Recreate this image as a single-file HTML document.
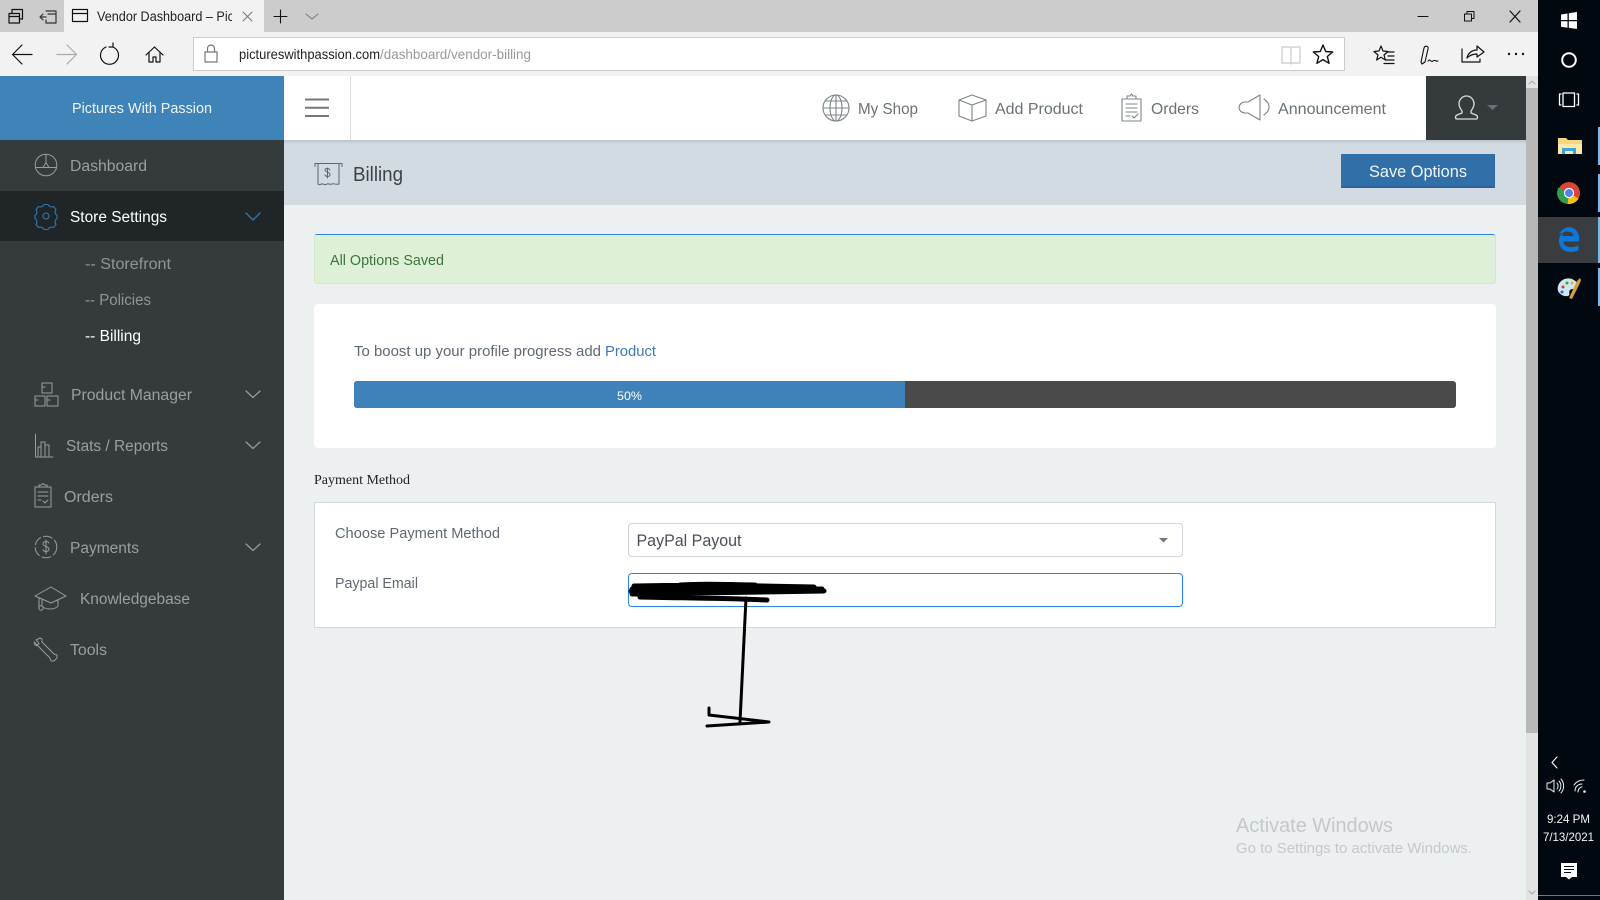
<!DOCTYPE html>
<html lang="en"><head><meta charset="utf-8"><title>Vendor Dashboard</title>
<style>
html,body{margin:0;padding:0;width:1600px;height:900px;overflow:hidden;background:#ecf0f1;font-family:"Liberation Sans",sans-serif}
div{position:absolute;box-sizing:border-box}
svg{position:absolute;left:0;top:0}
text{font-family:"Liberation Sans",sans-serif}
</style></head><body>
<div style="left:0;top:0;width:1538px;height:32px;background:#ccc"></div>
<div style="left:64px;top:0;width:200px;height:32px;background:#f2f2f2"></div>
<div style="left:0;top:32px;width:1538px;height:44px;background:#f2f2f2"></div>
<div style="left:193px;top:37px;width:1152px;height:34px;background:#fff;border:1px solid #ccc"></div>
<div style="left:284px;top:76px;width:1242px;height:824px;background:#ecf0f1"></div>
<div style="left:284px;top:76px;width:1242px;height:64px;background:#fff"></div>
<div style="left:350px;top:76px;width:1px;height:64px;background:#ddd"></div>
<div style="left:1426px;top:76px;width:100px;height:64px;background:#353b3d"></div>
<div style="left:284px;top:140px;width:1242px;height:65px;background:#d2dae2"></div>
<div style="left:284px;top:140px;width:1242px;height:4px;background:linear-gradient(#bcc4cb,#d2dae2)"></div>
<div style="left:0;top:76px;width:284px;height:64px;background:#3f84b8"></div>
<div style="left:0;top:140px;width:284px;height:760px;background:#353b3d"></div>
<div style="left:0;top:191px;width:284px;height:50px;background:#202628"></div>
<div style="left:1341px;top:154px;width:154px;height:34px;background:#316fa8;border-bottom:2px solid #2b639a;border-right:1px solid #2d679e"></div>
<div style="left:314px;top:234px;width:1182px;height:50px;background:#dff0d8;border:1px solid #d6e9c6;border-top:1px solid #2b85e8;border-radius:3px"></div>
<div style="left:314px;top:304px;width:1182px;height:144px;background:#fff;border-radius:4px"></div>
<div style="left:354px;top:381px;width:1102px;height:27px;background:#4a4a4a;border-radius:3px"></div>
<div style="left:354px;top:381px;width:551px;height:27px;background:#3f82b9;border-radius:3px 0 0 3px"></div>
<div style="left:314px;top:502px;width:1182px;height:126px;background:#fff;border:1px solid #d0d9e0"></div>
<div style="left:628px;top:523px;width:555px;height:34px;background:#fff;border:1px solid #ced4da;border-radius:4px"></div>
<div style="left:628px;top:573px;width:555px;height:34px;background:#fff;border:1px solid #2b85e8;border-radius:4px"></div>
<div style="left:1526px;top:76px;width:12px;height:824px;background:#e3e3e3"></div>
<div style="left:1526px;top:88px;width:12px;height:645px;background:#b8b8b8"></div>
<div style="left:1538px;top:0;width:62px;height:900px;background:#01080f"></div>
<div style="left:1538px;top:217px;width:60px;height:46px;background:#393d40"></div>
<div style="left:1598px;top:127px;width:2px;height:38px;background:#76b9ed"></div>
<div style="left:1598px;top:174px;width:2px;height:38px;background:#76b9ed"></div>
<div style="left:1598px;top:217px;width:2px;height:46px;background:#76b9ed"></div>
<div style="left:1598px;top:268px;width:2px;height:38px;background:#76b9ed"></div>
<div style="left:1538px;top:895px;width:62px;height:1px;background:#777"></div>

<svg width="1600" height="900" viewBox="0 0 1600 900" fill="none" stroke-linecap="round" stroke-linejoin="round">
<!-- browser tab row -->
<g stroke="#111" stroke-width="1.200">
<path d="M12 13V9.500h10.500V19H19M9 13.500h10.500V23H9zM9 16.500h10.500"/>
<path d="M46 11h10v12H46v-3M46 17h-6l3-3m-3 3l3 3M48 14h8" stroke="#333"/>
<path d="M72.500 9.500h15v12h-15zM72.500 13.500h15"/>
<path d="M243 12l9 9m0-9l-9 9" stroke="#777" stroke-width="1"/>
<path d="M280.500 10v13M274 16.500h13" stroke-width="1.100"/>
<path d="M306 14l6 5 6-5" stroke="#777" stroke-width="1"/>
<path d="M1418 16.500h10" stroke-width="1.100"/>
<path d="M1464.500 14h7v7h-7zM1467 14v-2.500h7v7h-2.500" stroke-width="1"/>
<path d="M1510 11l10 11m0-11l-10 11"/>
</g>
<text x="97" y="21" font-size="13.500" fill="#222" textLength="137" lengthAdjust="spacingAndGlyphs">Vendor Dashboard – Pic</text>
<rect x="232" y="6" width="6" height="20" fill="#f2f2f2"/>
<!-- browser toolbar -->
<g stroke="#111" stroke-width="1.200">
<path d="M13 54.500h19M22 45l-9.500 9.500L22 64"/>
<path d="M57 54.500h19M67 45l9.500 9.500L67 64" stroke="#aaa"/>
<path d="M106 47a9 9 0 1 0 7 0M113 47v-4m0 4h-4"/>
<path d="M146 55l8.500-8 8.500 8M149 53v9h4v-5h3v5h4v-9"/>
<path d="M205 52h12v10h-12zM207.500 52v-3.500a3.500 3.500 0 0 1 7 0V52" stroke="#777"/>
<path d="M1282 47h8l1 1 1-1h8v16h-8l-1 1-1-1h-8zM1291 48v15" stroke="#d2d2d2" stroke-width="1.400"/>
<path d="M1323 45l2.700 6.500 7 .5-5.400 4.500 1.800 6.800-6.100-3.700-6.100 3.700 1.800-6.800-5.400-4.500 7-.5z" stroke-width="1.400"/>
<path d="M1381 46l2 5 5 .5-4 3.500 1.400 5-4.400-2.800-4.400 2.800 1.400-5-4-3.500 5-.5zM1387 52h7M1388 56h6M1386 60h8M1384 63.500h10" stroke-width="1.200"/>
<path d="M1421 62l3-14c1-3 5-2 4 1l-3 13-3 2zM1428 61c2-3 3 2 5 0s3 1 5 0" stroke-width="1.100"/>
<path d="M1462 49v13h18v-3M1467 58c1-5 5-8 10-8v-4l7 6-7 5v-3c-4 0-7 1-10 4" stroke-width="1.200"/>
</g>
<g fill="#111"><circle cx="1509" cy="54" r="1.200"/><circle cx="1516" cy="54" r="1.200"/><circle cx="1523" cy="54" r="1.200"/></g>
<text x="239" y="59" font-size="14" fill="#222" textLength="141" lengthAdjust="spacingAndGlyphs">pictureswithpassion.com</text>
<text x="380" y="59" font-size="14" fill="#999" textLength="151" lengthAdjust="spacingAndGlyphs">/dashboard/vendor-billing</text>
<!-- logo + top nav -->
<text x="72" y="113" font-size="14.500" fill="#eef4f9" textLength="140" lengthAdjust="spacingAndGlyphs">Pictures With Passion</text>
<path d="M305 99.500h24M305 107.800h24M305 116h24" stroke="#777" stroke-width="2" stroke-linecap="butt"/>
<g stroke="#7c8488" stroke-width="1.100">
<circle cx="836" cy="108" r="13"/><ellipse cx="836" cy="108" rx="6" ry="13"/><path d="M836 95v26M823 108h26M825 101h22M825 115h22"/>
<path d="M959 100l13-5 14 5v16l-14 5-13-5zM959 100l13 5 14-5M972 105v16"/>
<path d="M1126 99h-4v22h19V99h-4M1127 99v-3h3l1.500-2 1.500 2h3v3zM1126 104h11M1126 108h11M1126 112h11M1126 116h4M1132 116l2 2 4-4"/>
<path d="M1260 95v25l-12-7h-3a6 6 0 0 1-6-5.500 6 6 0 0 1 6-5.500h3zM1264 99c3 2 5 5 5 8s-2 6-5 8"/>
</g>
<g font-size="16" fill="#6a7277">
<text x="858" y="114" textLength="60" lengthAdjust="spacingAndGlyphs">My Shop</text>
<text x="995" y="114" textLength="88" lengthAdjust="spacingAndGlyphs">Add Product</text>
<text x="1151" y="114" textLength="48" lengthAdjust="spacingAndGlyphs">Orders</text>
<text x="1278" y="114" textLength="108" lengthAdjust="spacingAndGlyphs">Announcement</text>
</g>
<path d="M1459 104a7.500 8 0 0 1 15 0c0 3-1.500 5-3 7v2l5 2c2 1 2 4 0 4h-19c-2 0-2-3 0-4l5-2v-2c-1.500-2-3-4-3-7z" stroke="#d9dcdd" stroke-width="1.300"/>
<path d="M1487 105h11l-5.500 5z" fill="#6a7174"/>
<!-- scrollbar arrows -->
<path d="M1529 84l3-3 3 3" stroke="#aaa" stroke-width="1.200"/>
<path d="M1529 891l3 3 3-3" stroke="#aaa" stroke-width="1.200"/>
<!-- sidebar -->
<g stroke="#999c9c" stroke-width="1">
<circle cx="46" cy="165" r="10.800"/><path d="M35.500 167.500h21M46 155v7M43 167.500l3-5 3 5"/>
<path d="M42 383h10v10H42zM35 396h10v10H35zM47 396h11v10H47zM42 383v4h3M35 396v4h3M47 396v4h3"/>
<path d="M35.500 434v23h17.500M38 456v-9h3v9M41 456v-14h4v14M45 456v-11h4v11"/>
<path d="M39 487h-4v20h16v-20h-4M39 487v-2h2l2-1.500 2 1.500h2v2zM38 492h10M38 496h10M38 500h3M43 501l2 2 3-3"/>
<circle cx="46" cy="547" r="10.800" stroke-dasharray="9 3"/>
<path d="M49 543c-1-2-6-2-6 1s6 2 6 5-5 3-6 1M46 540v14"/>
<path d="M35 596l16-9 15 9-15 7zM42 600v6c3 4 13 4 16 0v-6M39 598v10"/><circle cx="41" cy="608" r="2.200"/>
<path d="M36 640l4-2 2 1v3l12 12 3 1 0 3-3 3h-3l-1-3-12-12-3-1-1-3 3 3 2-1-1-2z"/>
</g>
<g stroke="#2e79b4" stroke-width="1.100"><circle cx="46" cy="216" r="3"/>
<path d="M43 206l1-1.500h4l1 1.500 2.500 1 2-.5 2.500 3-1 2 .5 2.500 1.500 1.500v3l-1.500 1.500-.5 2.500 1 2-2.500 3-2-.5-2.500 1-1 1.500h-4l-1-1.500-2.500-1-2 .5-2.500-3 1-2-.5-2.500-1.500-1.500v-3l1.500-1.500.5-2.500-1-2 2.500-3 2 .5z"/></g>
<path d="M246 213l7 7 7-7" stroke="#2e79b4" stroke-width="1.300"/>
<g stroke="#9a9d9d" stroke-width="1.200"><path d="M246 391l7 6.500 7-6.500M246 442l7 6.500 7-6.500M246 544l7 6.500 7-6.500"/></g>
<g font-size="15.500" fill="#9c9e9e">
<text x="70" y="171" textLength="77" lengthAdjust="spacingAndGlyphs">Dashboard</text>
<text x="71" y="400" textLength="121" lengthAdjust="spacingAndGlyphs">Product Manager</text>
<text x="66" y="451" textLength="102" lengthAdjust="spacingAndGlyphs">Stats / Reports</text>
<text x="64" y="502" textLength="49" lengthAdjust="spacingAndGlyphs">Orders</text>
<text x="70" y="553" textLength="69" lengthAdjust="spacingAndGlyphs">Payments</text>
<text x="80" y="604" textLength="110" lengthAdjust="spacingAndGlyphs">Knowledgebase</text>
<text x="70" y="655" textLength="37" lengthAdjust="spacingAndGlyphs">Tools</text>
<text x="85" y="269" textLength="86" lengthAdjust="spacingAndGlyphs" fill="#8f9596">-- Storefront</text>
<text x="85" y="305" textLength="66" lengthAdjust="spacingAndGlyphs" fill="#8f9596">-- Policies</text>
<text x="70" y="222" textLength="97" lengthAdjust="spacingAndGlyphs" fill="#fff">Store Settings</text>
<text x="85" y="341" textLength="56" lengthAdjust="spacingAndGlyphs" fill="#fff">-- Billing</text>
</g>
<!-- page head -->
<g stroke="#5b6670" stroke-width="1"><path d="M315 163.500h27M315 163.500v3M342 163.500v3M318 164v20c2 2 3-1 5 0s3 1 4 0 3 1 5 0 3 1 7 0v-20M330 170c-1-2-5-2-5 0s5 2 5 4.500-4 2.500-5 .5M327.500 168v10"/></g>
<text x="353" y="181" font-size="20" fill="#3d4448" textLength="50" lengthAdjust="spacingAndGlyphs">Billing</text>
<text x="1369" y="177" font-size="17" fill="#f2f6fa" textLength="98" lengthAdjust="spacingAndGlyphs">Save Options</text>
<text x="330" y="265" font-size="14.500" fill="#3c763d" textLength="114" lengthAdjust="spacingAndGlyphs">All Options Saved</text>
<text x="354" y="356" font-size="14.500" fill="#5f6973" textLength="247" lengthAdjust="spacingAndGlyphs">To boost up your profile progress add</text>
<text x="605" y="356" font-size="14.500" fill="#3d78c0" textLength="51" lengthAdjust="spacingAndGlyphs">Product</text>
<text x="617" y="400" font-size="12" fill="#fff" textLength="25" lengthAdjust="spacingAndGlyphs">50%</text>
<text x="314" y="484" font-size="14" fill="#222" style="font-family:'Liberation Serif',serif" textLength="96" lengthAdjust="spacingAndGlyphs">Payment Method</text>
<text x="335" y="538" font-size="14.500" fill="#5f6973" textLength="165" lengthAdjust="spacingAndGlyphs">Choose Payment Method</text>
<text x="335" y="588" font-size="14.500" fill="#5f6973" textLength="83" lengthAdjust="spacingAndGlyphs">Paypal Email</text>
<text x="636.500" y="546" font-size="17" fill="#495057" textLength="105" lengthAdjust="spacingAndGlyphs">PayPal Payout</text>
<path d="M1159 538h9l-4.500 4.500z" fill="#6f7780"/>
<!-- scribble -->
<g stroke="#000">
<path d="M631 591c40-3 90-4 180-3M634 586c50-1 100-1 180 1M632 594c60-1 90-1 192-3M640 597c40 1 80 1 127 3M680 585c30-2 50 0 75 0M632 589h190" stroke-width="5"/>
<path d="M746 598l-6 124" stroke-width="3"/>
<path d="M709 708v7l60 7-62 4" stroke-width="3"/>
</g>
<!-- activate watermark -->
<text x="1236" y="832" font-size="20" fill="#c4c8ca" textLength="157" lengthAdjust="spacingAndGlyphs">Activate Windows</text>
<text x="1236" y="853" font-size="14.500" fill="#c4c8ca" textLength="236" lengthAdjust="spacingAndGlyphs">Go to Settings to activate Windows.</text>
<!-- taskbar -->
<path d="M1561 14.500l6.500-1v6.500h-6.500zM1568.800 13.300l8.200-1.300v8h-8.200zM1561 21.300h6.500v6.500l-6.500-1zM1568.800 21.300h8.200v7.700l-8.200-1.200z" fill="#fff"/>
<circle cx="1569" cy="60" r="6.800" stroke="#fff" stroke-width="2"/>
<g stroke="#fff" stroke-width="1.300"><rect x="1563" y="93" width="11.500" height="13.500"/><path d="M1561 94h-1.500v11h1.500M1577 94h1.500v11h-1.500"/></g>
<path d="M1558 138h8l2 2h14v14h-24z" fill="#f5d77e"/><path d="M1558 144h24v10h-24z" fill="#fde9a5"/><path d="M1562 148h14v6h-3v-3h-8v3h-3z" fill="#39a3e0"/>
<circle cx="1569" cy="193" r="11" fill="#db4437"/>
<path d="M1569 193l9.500 5.500a11 11 0 0 1-11 5.400z" fill="#f4c20d"/><path d="M1569 193l-1.500 10.900a11 11 0 0 1-9-16.400z" fill="#2e9e4f"/>
<circle cx="1569" cy="193" r="5.200" fill="#fff"/><circle cx="1569" cy="193" r="4" fill="#4e82ee"/>
<path d="M1579 241.500h-15.500c0 6 8 7 15 4v5c-9 3.500-19.500 .5-19.500-9.500 0-5 3-9 7-11-2.500 1.500-3.500 4-4 6h11.500c0-3-3-4.500-6-4.500-3 0-6.500 1-8.500 3 2-5 7-8 12-7 6 1 9 7 8 14z" fill="#0d78d8"/>
<path d="M1558 286c2-6 8-9 14-7 5 2 7 6 5 9-2 2-5 0-7 2s1 5-2 6c-5 1-12-3-10-10z" fill="#cfe6f2"/>
<path d="M1569 298l8-17 3-3 1 2-1 3-8 16z" fill="#d99a3d"/>
<circle cx="1563" cy="287" r="1.500" fill="#d33"/><circle cx="1567" cy="283" r="1.500" fill="#3a3"/><circle cx="1572" cy="283" r="1.500" fill="#e8b020"/><circle cx="1562" cy="292" r="1.500" fill="#36c"/>
<path d="M1557 757l-5 5.500 5 5.500" stroke="#fff" stroke-width="1.100"/>
<g stroke="#eee" stroke-width="1"><path d="M1547 783h3l4-3v12l-4-3h-3zM1557 783c1.500 2 1.500 4 0 6M1559 781c2.500 3 2.500 7 0 10M1561 779c3.500 4 3.500 10 0 14"/>
<path d="M1575 791c0-4 3-7 7-7M1578 792c0-3 2-5 4-5M1574 785c2-3 5-5 10-5"/></g>
<circle cx="1584.500" cy="791.500" r="1.300" fill="#eee"/>
<g font-size="12" fill="#f4f4f4">
<text x="1547" y="823" textLength="43" lengthAdjust="spacingAndGlyphs">9:24 PM</text>
<text x="1543" y="841" textLength="51" lengthAdjust="spacingAndGlyphs">7/13/2021</text>
</g>
<path d="M1561 863h16v14h-5l-3 2.500-3-2.500h-5z" fill="#fff"/>
<path d="M1564 866.500h10M1564 869.500h10M1564 872.500h7" stroke="#01080f" stroke-width="1.100" stroke-linecap="butt"/>
</svg>
</body></html>
